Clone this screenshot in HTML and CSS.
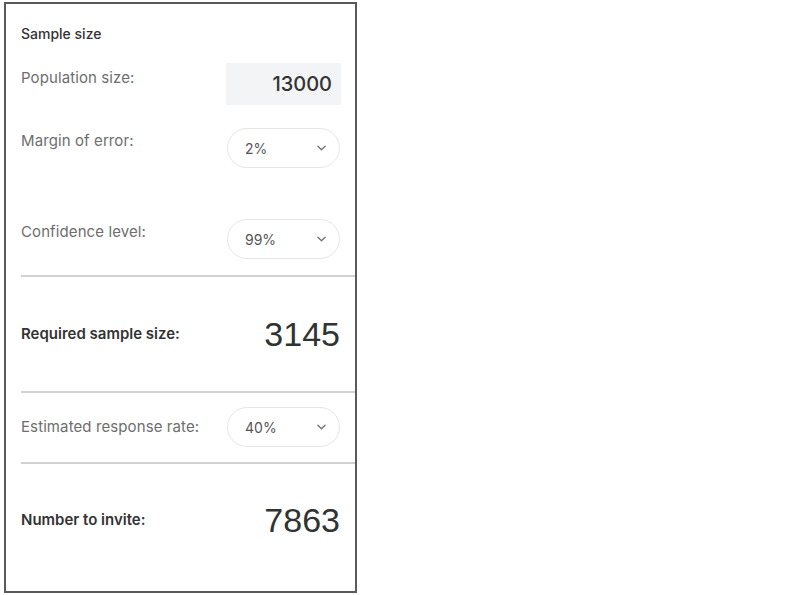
FILE: index.html
```html
<!DOCTYPE html>
<html lang="en">
<head>
  <meta charset="UTF-8">
  <link rel="stylesheet" href="styles.css">
  <title>Sample size</title>
</head>
<body>
  <div class="panel">
    <h3 class="title">Sample size</h3>

    <div class="row pop">
      <span class="label">Population size:</span>
      <div class="number-input">13000</div>
    </div>

    <div class="row margin">
      <span class="label">Margin of error:</span>
      <div class="select">2%<svg class="chev" viewBox="0 0 10 6" width="9" height="6"><path d="M1 1l4 4 4-4" fill="none" stroke="#777" stroke-width="1.6" stroke-linecap="round" stroke-linejoin="round"/></svg></div>
    </div>

    <div class="row conf">
      <span class="label">Confidence level:</span>
      <div class="select">99%<svg class="chev" viewBox="0 0 10 6" width="9" height="6"><path d="M1 1l4 4 4-4" fill="none" stroke="#777" stroke-width="1.6" stroke-linecap="round" stroke-linejoin="round"/></svg></div>
    </div>

    <hr class="divider d1">

    <div class="row result r1">
      <span class="label strong">Required sample size:</span>
      <span class="big">3145</span>
    </div>

    <hr class="divider d2">

    <div class="row centered rate">
      <span class="label">Estimated response rate:</span>
      <div class="select">40%<svg class="chev" viewBox="0 0 10 6" width="9" height="6"><path d="M1 1l4 4 4-4" fill="none" stroke="#777" stroke-width="1.6" stroke-linecap="round" stroke-linejoin="round"/></svg></div>
    </div>

    <hr class="divider d3">

    <div class="row result r2">
      <span class="label strong">Number to invite:</span>
      <span class="big">7863</span>
    </div>
  </div>
</body>
</html>
```

FILE: styles.css
```css
* {
  margin: 0;
  padding: 0;
  box-sizing: border-box;
}

body {
  font-family: Inter, "Noto Sans", sans-serif;
  background: #fff;
}

.panel {
  margin: 2px 0 0 4px;
  width: 353px;
  height: 591px;
  border: 2px solid #5a5a5a;
  padding: 20px 0 0 15px;
}

.title {
  font-size: 14px;
  line-height: 20px;
  font-weight: 500;
  color: #333;
}

.row {
  display: flex;
  justify-content: space-between;
  align-items: flex-start;
  padding-right: 15px;
}

.row.centered,
.row.result {
  align-items: center;
}

.label {
  font-size: 15px;
  line-height: 20px;
  letter-spacing: 0.1px;
  color: #6e6e6e;
  padding-top: 3px;
}

.pop .label {
  padding-top: 5px;
}

.centered .label,
.result .label {
  padding-top: 0;
}

.label.strong {
  color: #333;
  font-weight: 600;
  letter-spacing: 0;
}

.pop { margin-top: 19px; }
.margin { margin-top: 23px; }
.conf { margin-top: 51px; }
.r1 { margin-top: 37px; height: 40px; }
.rate { margin-top: 14px; }
.r2 { margin-top: 36px; height: 40px; }

.number-input {
  width: 115px;
  height: 42px;
  background: #f3f4f5;
  text-align: right;
  padding-right: 9px;
  font-size: 20px;
  line-height: 42px;
  font-weight: 500;
  color: #333;
  margin-right: -1px;
}

.select {
  width: 113px;
  height: 40px;
  border: 1px solid #e6e6e6;
  border-radius: 20px;
  display: flex;
  align-items: center;
  justify-content: space-between;
  padding: 0 13px 0 17px;
  font-size: 14px;
  color: #555;
}

.chev {
  display: block;
}

.divider {
  border: 0;
  height: 2px;
  background: #d2d2d2;
}

.d1 { margin-top: 16px; }
.d2 { margin-top: 37px; }
.d3 { margin-top: 15px; }

.big {
  font-family: "Liberation Sans", Arial, sans-serif;
  font-size: 34px;
  color: #2f3433;
  line-height: 40px;
}
```
